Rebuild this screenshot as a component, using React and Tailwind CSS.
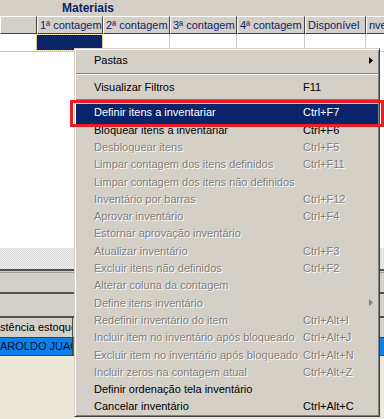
import React from 'react';

const font = { fontFamily: '"Liberation Sans", Arial, sans-serif' };

const columns = [
  { label: '', w: 'w-[37px]' },
  { label: '1ª contagem', w: 'w-[66px]' },
  { label: '2ª contagem', w: 'w-[67px]' },
  { label: '3ª contagem', w: 'w-[67px]' },
  { label: '4ª contagem', w: 'w-[68px]' },
  { label: 'Disponível', w: 'w-[61px]' },
  { label: 'nventário', w: 'w-[60px]' },
];

const items = [
  { label: 'Definir itens a inventariar', key: 'Ctrl+F7', active: true },
  { label: 'Bloquear itens a inventariar', key: 'Ctrl+F6' },
  { label: 'Desbloquear itens', key: 'Ctrl+F5', off: true },
  { label: 'Limpar contagem dos itens definidos', key: 'Ctrl+F11', off: true },
  { label: 'Limpar contagem dos itens não definidos', off: true },
  { label: 'Inventário por barras', key: 'Ctrl+F12', off: true },
  { label: 'Aprovar inventário', key: 'Ctrl+F4', off: true },
  { label: 'Estornar aprovação inventário', off: true },
  { label: 'Atualizar inventário', key: 'Ctrl+F3', off: true },
  { label: 'Excluir itens não definidos', key: 'Ctrl+F2', off: true },
  { label: 'Alterar coluna da contagem', off: true },
  { label: 'Define itens inventário', off: true, sub: true },
  { label: 'Redefinir inventário do item', key: 'Ctrl+Alt+I', off: true },
  { label: 'Incluir item no inventário após bloqueado', key: 'Ctrl+Alt+J', off: true },
  { label: 'Excluir item no inventário após bloqueado', key: 'Ctrl+Alt+N', off: true },
  { label: 'Incluir zeros na contagem atual', key: 'Ctrl+Alt+Z', off: true },
  { label: 'Definir ordenação tela inventário' },
  { label: 'Cancelar inventário', key: 'Ctrl+Alt+C' },
];

function Arrow({ off }) {
  return (
    <svg width="4" height="7" viewBox="0 0 4 7" className="absolute left-[293px] top-[5px]">
      <path d="M0 0 L4 3.5 L0 7 Z" fill={off ? '#808080' : '#000'} />
    </svg>
  );
}

function Item({ label, shortcut, off, active, sub }) {
  let tone = 'text-black';
  if (off) tone = 'text-[#808080] [text-shadow:1px_1px_0_#fff]';
  if (active) tone = 'text-white bg-[#0a246a] shadow-[0_3px_0_#0a246a]';
  return (
    <div className={`relative flex items-center h-[17.3px] pl-[18px] ${tone}`}>
      <span className="w-[209px] shrink-0 whitespace-nowrap">{label}</span>
      <span className="whitespace-nowrap">{shortcut}</span>
      {sub && <Arrow off={off} />}
    </div>
  );
}

function Separator({ h }) {
  return (
    <div className={`flex items-center ${h}`}>
      <div className="w-full border-t border-t-[#808080] border-b border-b-white" />
    </div>
  );
}

function Menu() {
  return (
    <div className="absolute left-[74px] top-[48px] w-[306px] bg-[#d4d0c8] border border-t-[#d4d0c8] border-l-[#d4d0c8] border-r-[#404040] border-b-[#404040] shadow-[inset_1px_1px_0_#fff,inset_-1px_-1px_0_#808080] px-[1px] pt-[3px] pb-[1px] text-[11px]">
      <Item label="Pastas" sub />
      <Separator h="h-[9px]" />
      <Item label="Visualizar Filtros" shortcut="F11" />
      <Separator h="h-[8.4px]" />
      {items.map((it) => (
        <Item key={it.label} label={it.label} shortcut={it.key} off={it.off} active={it.active} sub={it.sub} />
      ))}
    </div>
  );
}

export default function App() {
  return (
    <div className="relative w-[384px] h-[419px] overflow-hidden bg-white text-[11px]" style={font}>
      <div className="h-[16px] bg-[#d4d0c8] pl-[62px] text-[12px] font-bold leading-[16px] text-[#0a246a]">
        Materiais
      </div>

      <div className="flex h-[18px] bg-[#d4d0c8]">
        {columns.map((c, i) => (
          <div
            key={i}
            className={`${c.w} shrink-0 border-t border-l border-t-white border-l-white border-r border-b border-r-[#404040] border-b-[#404040] pl-[2px] leading-[16px] whitespace-nowrap overflow-hidden text-[#0a246a]`}
          >
            {c.label}
          </div>
        ))}
      </div>

      <div className="flex h-[18px]">
        {columns.map((c, i) => (
          <div key={i} className={`${c.w} shrink-0 border-r border-b border-[#c8c8c8] py-[1px]`}>
            {i === 1 && <div className="h-full bg-[#0a246a] outline outline-1 outline-dotted outline-[#d8c890]" />}
          </div>
        ))}
      </div>

      <div className="h-[196px]" />

      <div className="h-[21px] bg-[conic-gradient(#f2f2f2_25%,#d6d6d6_0_50%,#f2f2f2_0_75%,#d6d6d6_0)] bg-[length:2px_2px]" />
      <div className="h-[4px] bg-[#d4d0c8] border-t-2 border-t-[#505050] border-b border-b-[#a0a0a0]" />
      <div className="h-[19px] bg-[#d4d0c8]" />
      <div className="h-[2px] bg-[#505050]" />
      <div className="h-[22px] bg-[#d4d0c8]" />
      <div className="h-[2px] bg-[#505050]" />
      <div className="flex h-[19px] bg-[#d4d0c8]">
        <div className="w-[73px] shrink-0 border-r border-r-[#505050] overflow-hidden whitespace-nowrap leading-[19px] text-black">
          stência estoque
        </div>
      </div>
      <div className="flex h-[19px] bg-[#0c7fe8] border-y border-[#404040]">
        <div className="w-[73px] shrink-0 border-r border-r-[#404040] overflow-hidden whitespace-nowrap leading-[17px] text-[#06103a]">
          AROLDO JUACA
        </div>
      </div>
      <div className="h-[80px] bg-[#ece9d8]" />

      <Menu />

      <div className="absolute left-[70px] top-[100px] w-[314px] h-[27px] border-[3px] border-[#ec1c24]" />
    </div>
  );
}
